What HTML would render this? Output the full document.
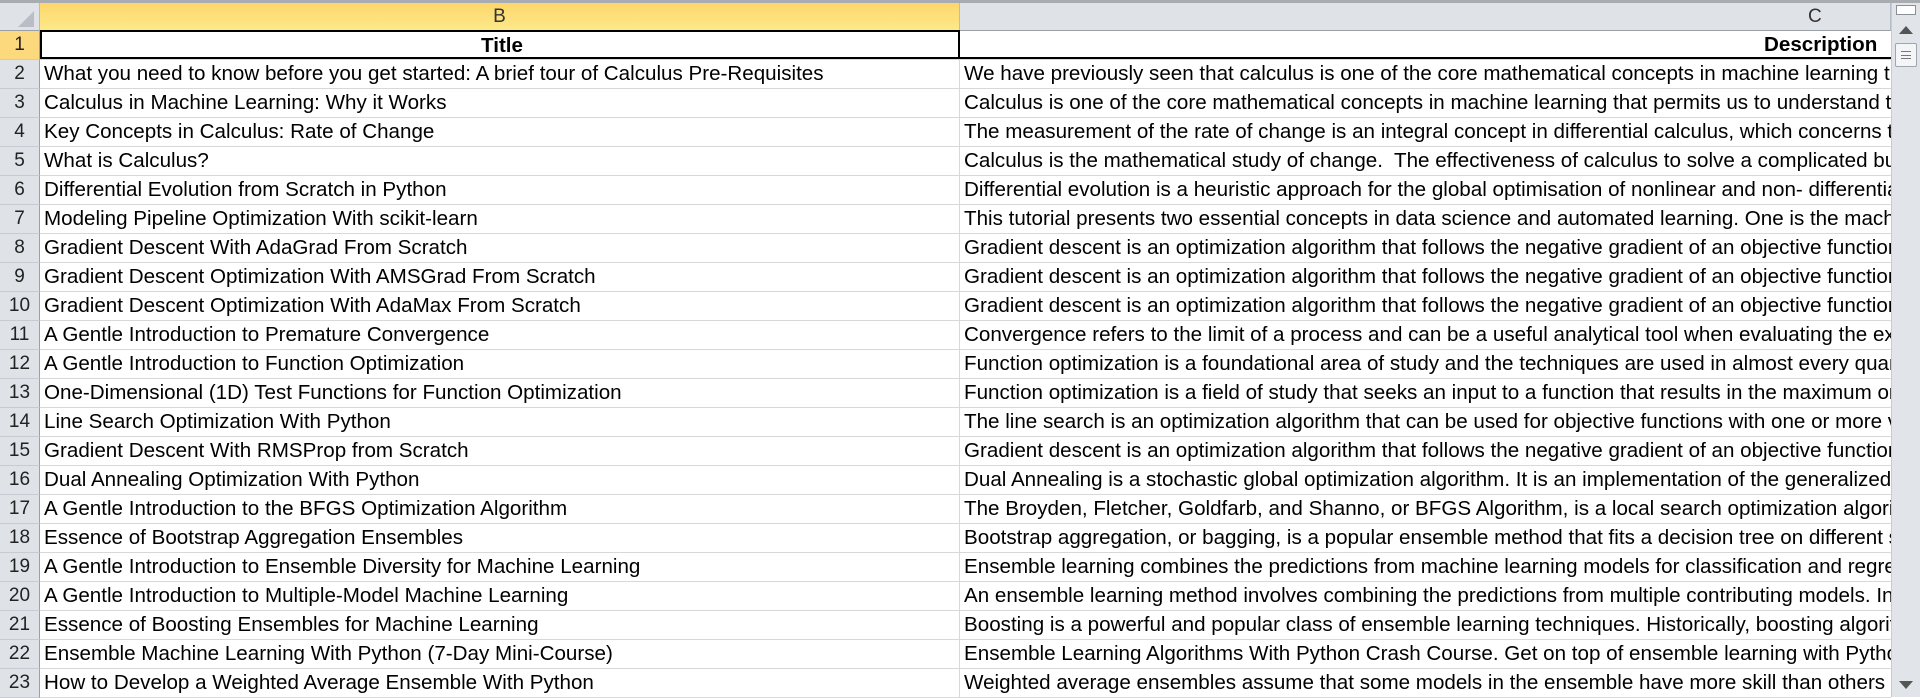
<!DOCTYPE html>
<html><head><meta charset="utf-8"><style>
*{margin:0;padding:0;box-sizing:border-box}
body{width:1920px;height:697px;overflow:hidden;background:#fff;font-family:"Liberation Sans",sans-serif;position:relative}
.top{position:absolute;left:0;top:0;width:1920px;height:3px;background:#a8abb0}
.hdr{position:absolute;top:3px;height:28px;background:#dfe3e8;border-right:1px solid #b6bcc6;border-bottom:1px solid #9aa0a8;font-size:19px;color:#333;text-align:center;line-height:28px}
.rows{position:absolute;left:0;top:31px}
.r{height:29px;display:flex;border-bottom:1px solid #d8d8d8;font-size:20.6px;line-height:28px;color:#000;white-space:nowrap}
.n{width:40px;background:#dfe3e8;border-right:1px solid #9aa0a8;border-bottom:1px solid #c8ccd2;text-align:center;color:#222;margin-bottom:-1px;font-size:19px}
.b{width:920px;padding-left:4px;border-right:1px solid #d8d8d8;overflow:hidden}
.c{width:931px;padding-left:4px;overflow:hidden}
.sb{position:absolute;left:1891px;top:3px;width:29px;height:694px;background:#e1e4e9;border-left:1px solid #c8ccd2}
</style></head><body>
<div class="top"></div>
<div class="hdr" style="left:0;width:40px;"><svg width="40" height="28"><polygon points="34,8 34,24 18,24" fill="#b9bec6"/></svg></div>
<div class="hdr" style="left:40px;width:920px;background:linear-gradient(#fdd66b,#fde98a);border-bottom:1px solid #e0b24a">B</div>
<div class="hdr" style="left:960px;width:931px;padding-left:848px;text-align:left">C</div>
<div class="rows">
<div class="r" style="height:29px"><div class="n" style="background:#fcd97c">1</div><div class="b" style="text-align:center;font-weight:bold;border:2px solid #000;margin-top:-1px">Title</div><div class="c" style="padding-left:804px;font-weight:bold;border-bottom:2px solid #000">Description</div></div>
<div class="r"><div class="n">2</div><div class="b">What you need to know before you get started: A brief tour of Calculus Pre-Requisites</div><div class="c">We have previously seen that calculus is one of the core mathematical concepts in machine learning that permits</div></div>
<div class="r"><div class="n">3</div><div class="b">Calculus in Machine Learning: Why it Works</div><div class="c">Calculus is one of the core mathematical concepts in machine learning that permits us to understand the internal</div></div>
<div class="r"><div class="n">4</div><div class="b">Key Concepts in Calculus: Rate of Change</div><div class="c">The measurement of the rate of change is an integral concept in differential calculus, which concerns the mathematics</div></div>
<div class="r"><div class="n">5</div><div class="b">What is Calculus?</div><div class="c">Calculus is the mathematical study of change.&nbsp; The effectiveness of calculus to solve a complicated but continuous</div></div>
<div class="r"><div class="n">6</div><div class="b">Differential Evolution from Scratch in Python</div><div class="c">Differential evolution is a heuristic approach for the global optimisation of nonlinear and non- differentiable</div></div>
<div class="r"><div class="n">7</div><div class="b">Modeling Pipeline Optimization With scikit-learn</div><div class="c">This tutorial presents two essential concepts in data science and automated learning. One is the machine learning</div></div>
<div class="r"><div class="n">8</div><div class="b">Gradient Descent With AdaGrad From Scratch</div><div class="c">Gradient descent is an optimization algorithm that follows the negative gradient of an objective function in order</div></div>
<div class="r"><div class="n">9</div><div class="b">Gradient Descent Optimization With AMSGrad From Scratch</div><div class="c">Gradient descent is an optimization algorithm that follows the negative gradient of an objective function in order</div></div>
<div class="r"><div class="n">10</div><div class="b">Gradient Descent Optimization With AdaMax From Scratch</div><div class="c">Gradient descent is an optimization algorithm that follows the negative gradient of an objective function in order</div></div>
<div class="r"><div class="n">11</div><div class="b">A Gentle Introduction to Premature Convergence</div><div class="c">Convergence refers to the limit of a process and can be a useful analytical tool when evaluating the expected</div></div>
<div class="r"><div class="n">12</div><div class="b">A Gentle Introduction to Function Optimization</div><div class="c">Function optimization is a foundational area of study and the techniques are used in almost every quantitative</div></div>
<div class="r"><div class="n">13</div><div class="b">One-Dimensional (1D) Test Functions for Function Optimization</div><div class="c">Function optimization is a field of study that seeks an input to a function that results in the maximum or minimum</div></div>
<div class="r"><div class="n">14</div><div class="b">Line Search Optimization With Python</div><div class="c">The line search is an optimization algorithm that can be used for objective functions with one or more variables</div></div>
<div class="r"><div class="n">15</div><div class="b">Gradient Descent With RMSProp from Scratch</div><div class="c">Gradient descent is an optimization algorithm that follows the negative gradient of an objective function in order</div></div>
<div class="r"><div class="n">16</div><div class="b">Dual Annealing Optimization With Python</div><div class="c">Dual Annealing is a stochastic global optimization algorithm. It is an implementation of the generalized simulated</div></div>
<div class="r"><div class="n">17</div><div class="b">A Gentle Introduction to the BFGS Optimization Algorithm</div><div class="c">The Broyden, Fletcher, Goldfarb, and Shanno, or BFGS Algorithm, is a local search optimization algorithm</div></div>
<div class="r"><div class="n">18</div><div class="b">Essence of Bootstrap Aggregation Ensembles</div><div class="c">Bootstrap aggregation, or bagging, is a popular ensemble method that fits a decision tree on different samples</div></div>
<div class="r"><div class="n">19</div><div class="b">A Gentle Introduction to Ensemble Diversity for Machine Learning</div><div class="c">Ensemble learning combines the predictions from machine learning models for classification and regression</div></div>
<div class="r"><div class="n">20</div><div class="b">A Gentle Introduction to Multiple-Model Machine Learning</div><div class="c">An ensemble learning method involves combining the predictions from multiple contributing models. In</div></div>
<div class="r"><div class="n">21</div><div class="b">Essence of Boosting Ensembles for Machine Learning</div><div class="c">Boosting is a powerful and popular class of ensemble learning techniques. Historically, boosting algorithms</div></div>
<div class="r"><div class="n">22</div><div class="b">Ensemble Machine Learning With Python (7-Day Mini-Course)</div><div class="c">Ensemble Learning Algorithms With Python Crash Course. Get on top of ensemble learning with Python in</div></div>
<div class="r"><div class="n">23</div><div class="b">How to Develop a Weighted Average Ensemble With Python</div><div class="c">Weighted average ensembles assume that some models in the ensemble have more skill than others and</div></div>
</div>
<div class="sb">
<div style="position:absolute;left:4px;top:2px;width:20px;height:10px;border:1px solid #8a9099;background:#fff"></div>
<svg style="position:absolute;left:6px;top:22px" width="16" height="10"><polygon points="8,1 15,9 1,9" fill="#555"/></svg>
<div style="position:absolute;left:3px;top:40px;width:22px;height:24px;border:1px solid #a0a6ae;border-radius:2px;background:#f4f5f7"></div>
<div style="position:absolute;left:9px;top:48px;width:10px;height:8px;border-top:1px solid #777;border-bottom:1px solid #777"></div>
<div style="position:absolute;left:9px;top:52px;width:10px;height:1px;background:#777"></div>
<svg style="position:absolute;left:6px;top:677px" width="16" height="10"><polygon points="1,1 15,1 8,9" fill="#555"/></svg>
</div>
</body></html>
